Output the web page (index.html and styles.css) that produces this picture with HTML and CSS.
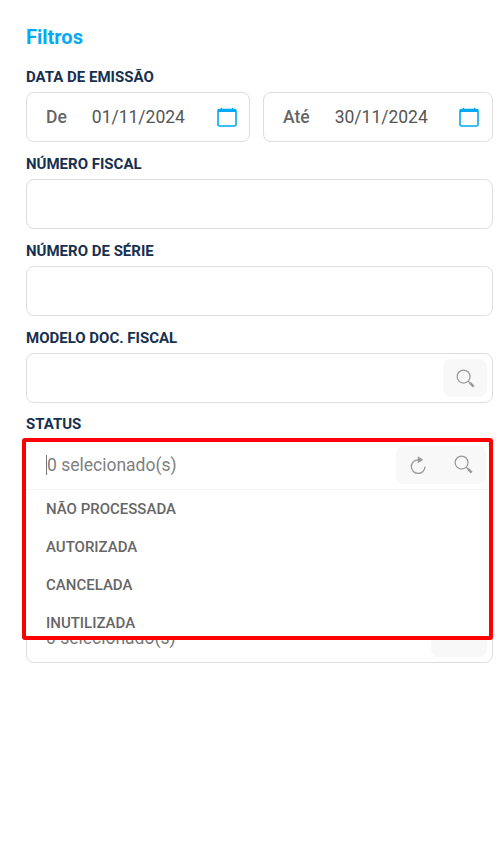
FILE: index.html
```html
<!DOCTYPE html>
<html lang="en">
<head>
    <meta charset="UTF-8">
    <meta name="viewport" content="width=device-width, initial-scale=1.0">
    <title>Filtros</title>
    <link rel="stylesheet" href="styles.css">
</head>
<body>
    <form class="filters">
        <h2 class="filters-title">Filtros</h2>

        <div class="field">
            <label class="field-label">DATA DE EMISSÃO</label>
            <div class="date-range">
                <div class="field-box date-box date-from">
                    <span class="date-prefix">De</span>
                    <span class="date-value">01/11/2024</span>
                    <svg class="icon-calendar" viewBox="0 0 20 20"><rect x="1" y="2.5" width="18" height="16.5" rx="1.5" fill="none" stroke="#03a9f4" stroke-width="1.6"/><path d="M1 2.5h18v2.5H1z" fill="#03a9f4"/><path d="M4.5 .8v2M15.5 .8v2" stroke="#03a9f4" stroke-width="1.4"/></svg>
                </div>
                <div class="field-box date-box date-to">
                    <span class="date-prefix">Até</span>
                    <span class="date-value">30/11/2024</span>
                    <svg class="icon-calendar" viewBox="0 0 20 20"><rect x="1" y="2.5" width="18" height="16.5" rx="1.5" fill="none" stroke="#03a9f4" stroke-width="1.6"/><path d="M1 2.5h18v2.5H1z" fill="#03a9f4"/><path d="M4.5 .8v2M15.5 .8v2" stroke="#03a9f4" stroke-width="1.4"/></svg>
                </div>
            </div>
        </div>

        <div class="field">
            <label class="field-label">NÚMERO FISCAL</label>
            <div class="field-box"></div>
        </div>

        <div class="field">
            <label class="field-label">NÚMERO DE SÉRIE</label>
            <div class="field-box"></div>
        </div>

        <div class="field">
            <label class="field-label">MODELO DOC. FISCAL</label>
            <div class="field-box">
                <div class="box-actions">
                    <svg class="icon-search" viewBox="0 0 20 20"><circle cx="8" cy="8" r="6.8" fill="none" stroke="#999" stroke-width="1.3"/><path d="M12.8 12.8l5.4 5.4" stroke="#999" stroke-width="1.3"/><path d="M14.6 14.6l4 4" stroke="#999" stroke-width="2.4"/></svg>
                </div>
            </div>
        </div>

        <div class="field status-field">
            <label class="field-label">STATUS</label>
            <div class="field-box"></div>

            <div class="status-dropdown">
                <div class="dropdown-head">
                    <span class="caret"></span>
                    <span class="dropdown-count">0 selecionado(s)</span>
                    <div class="box-actions wide">
                        <svg class="icon-refresh" viewBox="0 0 20 20"><path d="M10.2 4.2a7.6 7.6 0 1 0 7.6 7.6" fill="none" stroke="#999" stroke-width="1.4"/><path d="M9.8 .4l6 3.9-6 3.7z" fill="#999"/></svg>
                        <svg class="icon-search" viewBox="0 0 20 20"><circle cx="8" cy="8" r="6.8" fill="none" stroke="#999" stroke-width="1.3"/><path d="M12.8 12.8l5.4 5.4" stroke="#999" stroke-width="1.3"/><path d="M14.6 14.6l4 4" stroke="#999" stroke-width="2.4"/></svg>
                    </div>
                </div>
                <ul class="dropdown-list">
                    <li>NÃO PROCESSADA</li>
                    <li>AUTORIZADA</li>
                    <li>CANCELADA</li>
                    <li>INUTILIZADA</li>
                </ul>
            </div>
        </div>

        <div class="field">
            <label class="field-label">TIPO DE OPERAÇÃO</label>
            <div class="field-box"></div>
        </div>

        <div class="field">
            <label class="field-label">FILIAL</label>
            <div class="field-box">
                <span class="box-text">0 selecionado(s)</span>
                <div class="box-actions narrow"></div>
            </div>
        </div>
    </form>
</body>
</html>
```

FILE: styles.css
```css
* {
    box-sizing: border-box;
}
body {
    font-family: Roboto, Arial, sans-serif;
    background-color: white;
    color: #555;
    margin: 0;
    padding: 0;
}
.filters {
    padding: 26px 11px 0 26px;
}
.filters-title {
    margin: 0 0 18px 0;
    font-size: 20px;
    line-height: 23px;
    font-weight: 700;
    color: #03a9f4;
}
.field {
    margin-bottom: 12px;
}
.field-label {
    display: block;
    height: 20px;
    margin-bottom: 5px;
    font-size: 15px;
    line-height: 20px;
    font-weight: 700;
    color: #17304f;
}
.field-box {
    display: flex;
    align-items: center;
    height: 50px;
    border: 1px solid #ddd;
    border-radius: 8px;
    padding: 0 5px 0 19px;
    background: white;
}
.date-range {
    display: flex;
    gap: 13px;
}
.date-from {
    width: 224px;
}
.date-to {
    width: 230px;
}
.date-prefix {
    font-size: 17.5px;
    font-weight: 500;
    color: #666;
}
.date-value {
    margin-left: 25px;
    font-size: 17.5px;
    color: #555;
}
.icon-calendar {
    width: 20px;
    height: 20px;
    margin-left: auto;
    margin-right: 7px;
}
.date-to .icon-calendar {
    margin-right: 8px;
}
.box-actions {
    display: flex;
    align-items: center;
    justify-content: center;
    margin-left: auto;
    width: 44px;
    height: 38px;
    border-radius: 8px;
    background: #f8f8f8;
}
.box-actions.wide {
    width: 90px;
    gap: 27px;
}
.box-actions.narrow {
    width: 56px;
}
.box-text {
    font-size: 17.5px;
    color: #777;
}
.icon-search {
    width: 19px;
    height: 19px;
}
.icon-refresh {
    width: 18px;
    height: 20px;
}
.status-field {
    position: relative;
    margin-top: -1px;
}
.status-dropdown {
    position: absolute;
    top: 24px;
    left: -4px;
    width: 471px;
    height: 202px;
    border: 4px solid #f00;
    border-radius: 3px;
    background: white;
    overflow: hidden;
}
.dropdown-head {
    display: flex;
    align-items: center;
    height: 48px;
    padding: 0 3px 2px 20px;
    border-bottom: 1px solid #f5f5f5;
}
.caret {
    width: 1px;
    height: 20px;
    background: #777;
}
.dropdown-count {
    font-size: 17.5px;
    color: #808080;
}
.dropdown-list {
    list-style: none;
    margin: 0;
    padding: 0;
}
.dropdown-list li {
    height: 38px;
    padding-left: 20px;
    font-size: 15px;
    line-height: 38px;
    font-weight: 500;
    color: #666;
}
```
